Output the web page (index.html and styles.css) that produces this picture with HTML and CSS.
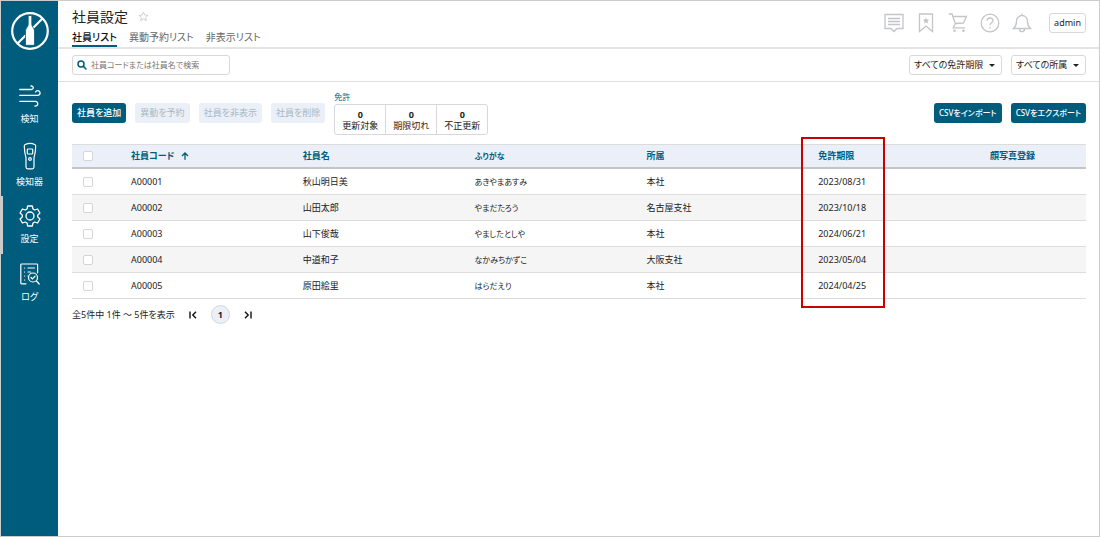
FILE: index.html
```html
<!DOCTYPE html>
<html lang="ja">
<head>
<meta charset="utf-8">
<title>社員設定</title>
<link rel="stylesheet" href="styles.css">
</head>
<body>
<div class="app">
  <nav class="sidebar">
    <a class="logo" href="#" aria-label="ホーム">
      <svg viewBox="0 0 38 38" width="38" height="38" fill="none" stroke="#fff">
        <circle cx="19" cy="19" r="17.8" stroke-width="2.2"/>
        <path d="M6.500 31.500 31.500 6.500" stroke-width="2.200"/>
        <path d="M17.200 3.500h3.600v9c0 2.500 2.700 3.500 2.700 6.500v13.300q0 1-1 1h-7q-1 0-1-1V19c0-3 2.700-4 2.700-6.500z" fill="#fff" stroke="#005c7d" stroke-width=".8"/>
      </svg>
    </a>
    <a class="nav-item" href="#">
      <svg viewBox="0 0 22 22" width="22" height="22" fill="none" stroke="#fff" stroke-width="1.300" stroke-linecap="round"><path d="M.8 4.500h11.500c2.800 0 2.500-3.800-.3-3.500M.8 10.300h17.600c3.600 0 3.400-4.700.2-4.600-1 0-1.700.5-2 1.200M.8 16.300h15.400c3.600 0 3.200 5.200-.2 4.700"/></svg>
      <span>検知</span>
    </a>
    <a class="nav-item device" href="#">
      <svg viewBox="0 0 14 28" width="14" height="28" fill="none" stroke="#fff" stroke-width="1.200"><path d="M2.300 2.500Q7 .2 11.700 2.500q1.100.4 1 1.800-.1 6-1.700 11.500V25q0 1.800-1.800 1.800H4.800Q3 26.800 3 25v-9.200Q1.400 10.300 1.300 4.300q-.1-1.400 1-1.800z"/><rect x="4.300" y="7" width="5.400" height="5" rx=".7"/><circle cx="7" cy="17" r="1.300"/></svg>
      <span>検知器</span>
    </a>
    <a class="nav-item active" href="#">
      <svg viewBox="0 0 22 22" width="22" height="22" fill="none" stroke="#fff" stroke-width="1.300" stroke-linejoin="round"><path d="M8.700 1h4.600l.7 3 1.700 1 2.900-1 2.300 4-2.200 2.100v1.800l2.200 2.100-2.300 4-2.900-1-1.700 1-.7 3H8.700L8 18l-1.700-1-2.900 1-2.300-4 2.200-2.100v-1.800L1.100 8l2.300-4 2.900 1L8 4z"/><circle cx="11" cy="11" r="4"/></svg>
      <span>設定</span>
    </a>
    <a class="nav-item" href="#">
      <svg viewBox="0 0 20 22" width="20" height="22" fill="none" stroke="#fff" stroke-width="1.200" stroke-linecap="round"><path d="M6 20.800H1.600Q.8 20.800.8 20V1.800Q.8 1 1.600 1h15.200q.8 0 .8.800v8M8 5h6.500M8 9h2.500M8 13h.1M4.500 5h.1M4.500 9h.1M4.500 13h.1M4.500 17h.1M16.500 18l2.700 3"/><circle cx="13" cy="14.500" r="4.500"/><path d="M11 14.500l1.500 1.500 2.600-2.800"/></svg>
      <span>ログ</span>
    </a>
  </nav>

  <main class="main">
    <header class="header">
      <div class="heading">
        <div class="title-row">
          <h1>社員設定</h1>
          <button class="icon-button" aria-label="お気に入り">
            <svg viewBox="0 0 12 12" width="11" height="11" fill="none" stroke="#c4c6ca" stroke-width=".9"><path d="M6 1.200l1.400 3.200 3.500.3-2.600 2.400.8 3.400L6 8.700l-3.100 1.800.8-3.400L1.100 4.700l3.500-.3z"/></svg>
          </button>
        </div>
        <nav class="tabs">
          <a class="tab selected" href="#">社員リスト</a>
          <a class="tab" href="#">異動予約リスト</a>
          <a class="tab" href="#">非表示リスト</a>
        </nav>
      </div>
      <div class="tools">
        <button class="icon-button" aria-label="メッセージ"><svg viewBox="0 0 20 20" width="20" height="20" class="tool-icon"><path d="M1 1.500h18v14h-6l-3 3-3-3H1zM4 5.500h12M4 8.500h12M4 11.500h12"/></svg></button>
        <button class="icon-button" aria-label="ブックマーク"><svg viewBox="0 0 20 20" width="20" height="20" class="tool-icon"><path d="M3.500 1h13v17.500L10 13l-6.500 5.500z"/><path class="solid" d="M10 4.500l.9 2.100 2.300.2-1.700 1.500.5 2.300L10 9.400l-2 1.200.5-2.300-1.700-1.500 2.300-.2z"/></svg></button>
        <button class="icon-button" aria-label="カート"><svg viewBox="0 0 20 20" width="20" height="20" class="tool-icon"><path d="M.8 1H4l3.300 9.500-2.100 4.300h12M5 3.500h13.500l-3 6.500-8.200.5"/><circle class="solid" cx="6.500" cy="17.800" r="1.300"/><circle class="solid" cx="15.500" cy="17.800" r="1.300"/></svg></button>
        <button class="icon-button" aria-label="ヘルプ"><svg viewBox="0 0 20 20" width="20" height="20" class="tool-icon"><circle cx="10" cy="10" r="8.800"/><path d="M7.200 7.800C7.200 4 13 4.200 13 7.500c0 2.200-3 2.300-3 4.800M10 14v1.500"/></svg></button>
        <button class="icon-button" aria-label="通知"><svg viewBox="0 0 20 20" width="20" height="20" class="tool-icon"><path d="M10 .5v2M1.500 15.500h17c-2-1.800-3-3-3-7 0-8-11-8-11 0 0 4-1 5.200-3 7zM7.500 16c0 3.600 5 3.600 5 0"/></svg></button>
        <button class="user">admin</button>
      </div>
    </header>

    <section class="filters">
      <label class="search">
        <svg viewBox="0 0 10 10" width="10" height="10" fill="none" stroke="#005c7d" stroke-width="1.500" stroke-linecap="round"><circle cx="4" cy="4" r="3"/><path d="M6.400 6.400L9 9"/></svg>
        <input type="text" placeholder="社員コードまたは社員名で検索" aria-label="社員コードまたは社員名で検索">
      </label>
      <div class="selects">
        <span class="select"><select aria-label="免許期限"><option>すべての免許期限</option></select></span>
        <span class="select"><select aria-label="所属"><option>すべての所属</option></select></span>
      </div>
    </section>

    <section class="content">
      <div class="actions">
        <div class="action-group">
          <button class="button">社員を追加</button>
          <button class="button" disabled>異動を予約</button>
          <button class="button" disabled>社員を非表示</button>
          <button class="button" disabled>社員を削除</button>
        </div>
        <div class="license">
          <div class="license-label">免許</div>
          <div class="counters">
            <div class="counter"><b>0</b><span>更新対象</span></div>
            <div class="counter"><b>0</b><span>期限切れ</span></div>
            <div class="counter"><b>0</b><span>不正更新</span></div>
          </div>
        </div>
        <div class="csv">
          <button class="button">CSVをインポート</button>
          <button class="button">CSVをエクスポート</button>
        </div>
      </div>

      <table class="staff">
        <thead>
          <tr>
            <th class="check"><input type="checkbox" aria-label="すべて選択"></th>
            <th>社員コード<svg class="sort" viewBox="0 0 8 8" width="8" height="8" fill="none" stroke="#005c7d" stroke-width="1.300"><path d="M4 7.800V1M1 4l3-3 3 3"/></svg></th>
            <th>社員名</th>
            <th class="kana">ふりがな</th>
            <th>所属</th>
            <th class="marked">免許期限<span class="marker"></span></th>
            <th class="photo">顔写真登録</th>
          </tr>
        </thead>
        <tbody>
          <tr><td class="check"><input type="checkbox" aria-label="A00001"></td><td>A00001</td><td>秋山明日美</td><td class="kana">あきやまあすみ</td><td>本社</td><td>2023/08/31</td><td></td></tr>
          <tr><td class="check"><input type="checkbox" aria-label="A00002"></td><td>A00002</td><td>山田太郎</td><td class="kana">やまだたろう</td><td>名古屋支社</td><td>2023/10/18</td><td></td></tr>
          <tr><td class="check"><input type="checkbox" aria-label="A00003"></td><td>A00003</td><td>山下俊哉</td><td class="kana">やましたとしや</td><td>本社</td><td>2024/06/21</td><td></td></tr>
          <tr><td class="check"><input type="checkbox" aria-label="A00004"></td><td>A00004</td><td>中道和子</td><td class="kana">なかみちかずこ</td><td>大阪支社</td><td>2023/05/04</td><td></td></tr>
          <tr><td class="check"><input type="checkbox" aria-label="A00005"></td><td>A00005</td><td>原田絵里</td><td class="kana">はらだえり</td><td>本社</td><td>2024/04/25</td><td></td></tr>
        </tbody>
      </table>

      <div class="pager">
        <span>全5件中 1件 ～ 5件を表示</span>
        <button class="icon-button" aria-label="最初のページ"><svg viewBox="0 0 8 8" width="8" height="8" fill="none" stroke="#111" stroke-width="1.400"><path d="M1 .5v7M7 .8L3.800 4 7 7.200"/></svg></button>
        <button class="page">1</button>
        <button class="icon-button" aria-label="最後のページ"><svg viewBox="0 0 8 8" width="8" height="8" fill="none" stroke="#111" stroke-width="1.400"><path d="M7 .5v7M1 .8L4.200 4 1 7.200"/></svg></button>
      </div>
    </section>
  </main>
</div>
</body>
</html>
```
FILE: styles.css
```css
* {
  box-sizing: border-box;
}

body {
  margin: 0;
  color: #222;
  background: #fff;
  font: 9px/12px "Noto Sans", "Noto Sans CJK JP", sans-serif;
  font-feature-settings: "palt";
}

button,
input,
select {
  font: inherit;
  font-feature-settings: inherit;
  color: inherit;
}

a {
  color: inherit;
  text-decoration: none;
}

svg {
  display: block;
}

.app {
  display: flex;
  min-height: 100vh;
  border: 1px solid #ccc;
}

/* Sidebar */
.sidebar {
  flex: none;
  width: 57px;
  padding-top: 11px;
  background: #005c7d;
  color: #fff;
}

.logo {
  display: flex;
  justify-content: center;
  margin-bottom: 26px;
}

.nav-item {
  display: flex;
  flex-direction: column;
  align-items: center;
  justify-content: center;
  gap: 6px;
  height: 58px;
  border-left: 2px solid transparent;
  border-right: 2px solid transparent;
}

.nav-item.device {
  height: 62px;
}

.nav-item.active {
  border-left-color: #ccc;
}

/* Header */
.main {
  flex: 1;
  min-width: 0;
}

.header {
  display: flex;
  justify-content: space-between;
  padding: 7px 13px 0 14px;
  border-bottom: 2px solid #e4e4e6;
}

.title-row {
  display: flex;
  align-items: center;
  gap: 10px;
  height: 17px;
}

h1 {
  margin: 0;
  font-size: 14px;
  line-height: 16px;
  font-weight: 400;
}

.tabs {
  display: flex;
  gap: 12px;
  padding-top: 6px;
  font-size: 10px;
}

.tab {
  padding-bottom: 2px;
  border-bottom: 2px solid transparent;
  color: #666;
}

.tab.selected {
  color: #111;
  font-weight: 500;
  border-bottom-color: #005c7d;
}

.icon-button {
  padding: 0;
  border: 0;
  background: none;
}

.tools {
  display: flex;
  align-items: center;
  align-self: flex-start;
  gap: 12px;
  padding-top: 5px;
}

.tool-icon {
  fill: none;
  stroke: #c3c5c9;
  stroke-width: 1.3;
}

.tool-icon .solid {
  fill: #c3c5c9;
  stroke: none;
}

.user {
  height: 20px;
  margin-left: 5px;
  padding: 0 4px;
  border: 1px solid #d8d8dc;
  border-radius: 3px;
  background: #fff;
}

/* Filters */
.filters {
  display: flex;
  align-items: center;
  justify-content: space-between;
  padding: 6px 13px 6px 14px;
  border-bottom: 1px solid #e0e0e2;
}

.search {
  display: flex;
  align-items: center;
  gap: 4px;
  width: 158px;
  height: 20px;
  padding: 0 4px;
  border: 1px solid #d8d8dc;
  border-radius: 3px;
}

.search input {
  flex: 1;
  min-width: 0;
  padding: 0;
  border: 0;
  outline: 0;
  background: none;
  font-size: 8px;
}

.search input::placeholder {
  color: #777;
}

.selects {
  display: flex;
  gap: 9px;
}

.select {
  position: relative;
}

.select::after {
  content: "";
  position: absolute;
  right: 7px;
  top: 9px;
  border: 3px solid transparent;
  border-top-color: #222;
  border-bottom: 0;
  pointer-events: none;
}

.select select {
  display: block;
  height: 20px;
  padding: 0 16px 0 4px;
  border: 1px solid #d8d8dc;
  border-radius: 3px;
  background: #fff;
  appearance: none;
}

/* Actions */
.content {
  padding: 10px 13px 10px 14px;
}

.actions {
  display: flex;
  align-items: flex-start;
}

.action-group,
.csv {
  display: flex;
  gap: 9px;
  padding-top: 11px;
}

.csv {
  margin-left: auto;
}

.button {
  height: 20px;
  padding: 0 5px;
  border: 0;
  border-radius: 3px;
  background: #005c7d;
  color: #fff;
  font-weight: 500;
}

.csv .button {
  font-size: 8px;
}

.button:disabled {
  background: #ebeff7;
  color: #a9b8c2;
  font-weight: 400;
}

.license {
  margin-left: 9px;
}

.license-label {
  line-height: 10px;
  margin-bottom: 2px;
  font-size: 8px;
  color: #005c7d;
}

.counters {
  display: flex;
  border: 1px solid #d8d8dc;
  border-radius: 3px;
}

.counter {
  display: flex;
  flex-direction: column;
  align-items: center;
  padding: 4px 7px 3px;
  line-height: 11px;
}

.counter + .counter {
  border-left: 1px solid #d8d8dc;
}

/* Table */
.staff {
  width: 100%;
  margin-top: 9px;
  border-collapse: separate;
  border-spacing: 0;
  table-layout: fixed;
}

.staff th,
.staff td {
  height: 26px;
  padding: 0;
  border-bottom: 1px solid #dcdcde;
  text-align: left;
}

.staff th {
  height: 25px;
  background: #ebeff7;
  border-top: 1px solid #dcdcde;
  border-bottom: 2px solid #c2c4c8;
  color: #005c7d;
  font-weight: 700;
}

.staff .check {
  width: 59px;
  padding-left: 11px;
}

.staff .kana {
  font-size: 8px;
}

.staff .photo {
  width: 96px;
}

.staff tbody tr:nth-child(even) {
  background: #f5f5f5;
}

.staff input {
  display: block;
  width: 10px;
  height: 10px;
  margin: 0;
  border: 1px solid #d4d5d9;
  border-radius: 2px;
  background: #fff;
  appearance: none;
}

.sort {
  display: inline-block;
  margin-left: 7px;
  vertical-align: -1px;
}

.marked {
  position: relative;
}

.marker {
  position: absolute;
  top: -8px;
  left: -17px;
  width: 84px;
  height: 171px;
  border: 2px solid #c80000;
}

/* Pager */
.pager {
  display: flex;
  align-items: center;
  gap: 14px;
  padding-top: 6px;
}

.page {
  width: 19px;
  height: 19px;
  padding: 0;
  border: 1px solid #d4d5d9;
  border-radius: 50%;
  background: #ebeff7;
  font-weight: 700;
}
```
